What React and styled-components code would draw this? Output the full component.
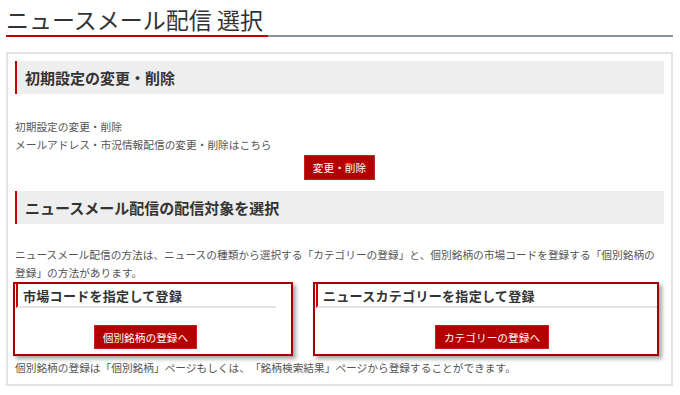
import styled, { createGlobalStyle } from 'styled-components';

const GlobalStyle = createGlobalStyle`
  body {
    margin: 0;
    background: #fff;
    font-family: 'Noto Sans CJK JP', 'Noto Sans', sans-serif;
    color: #333;
    text-spacing-trim: space-all;
  }
`;

const Page = styled.div`
  width: 680px;
  padding: 0 7px 0 6px;
  box-sizing: border-box;
`;

const Title = styled.h1`
  margin: 0;
  padding-top: 4px;
  height: 31px;
  font-size: 23px;
  font-weight: 400;
  line-height: 31px;
  color: #333;
`;

const TitleRule = styled.div`
  display: flex;
  height: 2px;
  margin-bottom: 15px;

  span:first-child {
    width: 262px;
    background: #c40000;
  }
  span:last-child {
    flex: 1;
    background: #8b959e;
  }
`;

const Panel = styled.div`
  border: 2px solid #e3e3e3;
  padding: 7px 7px 7px;
`;

const SectionHead = styled.h2`
  margin: ${(p) => p.$top || 0}px 0 0;
  height: 33px;
  display: flex;
  align-items: center;
  padding-left: 8px;
  background: #eeeeee;
  border-left: 2px solid #c40000;
  font-size: 15px;
  font-weight: 700;
  color: #333;
`;

const Text = styled.p`
  margin: ${(p) => p.$top || 0}px 0 0;
  font-size: 10.7px;
  line-height: 18px;
  color: #555;
`;

const ButtonRow = styled.div`
  display: flex;
  justify-content: center;
  margin-top: ${(p) => p.$top || 0}px;
  padding-left: ${(p) => p.$shift || 0}px;
`;

const RedButton = styled.a`
  display: inline-flex;
  align-items: center;
  height: ${(p) => p.$h || 24}px;
  padding: 0 8px;
  background: #b30000;
  border: 1px solid #c62020;
  box-sizing: border-box;
  color: #fff;
  font-size: 10.7px;
  text-decoration: none;
`;

const BoxRow = styled.div`
  display: flex;
  gap: 20px;
  margin-left: -2px;
`;

const Box = styled.div`
  width: ${(p) => p.$w}px;
  height: 74px;
  box-sizing: border-box;
  border: 2px solid #a80000;
  padding: 0 ${(p) => p.$pr || 0}px 0 0;
  box-shadow: 3px 3px 4px rgba(0, 0, 0, 0.35);
  background: #fff;
`;

const BoxHead = styled.div`
  height: 22px;
  margin-left: 1px;
  border-left: 2px solid #c40000;
  border-bottom: 2px solid #e2e2e2;
  padding-left: 5px;
  display: flex;
  align-items: center;
  font-size: 13px;
  font-weight: 700;
  letter-spacing: 0.3px;
  color: #333;
`;

export default function App() {
  return (
    <Page>
      <GlobalStyle />
      <Title>ニュースメール配信 選択</Title>
      <TitleRule>
        <span />
        <span />
      </TitleRule>
      <Panel>
        <SectionHead>初期設定の変更・削除</SectionHead>
        <Text $top={24}>
          初期設定の変更・削除
          <br />
          メールアドレス・市況情報配信の変更・削除はこちら
        </Text>
        <ButtonRow $top={1}>
          <RedButton href="#" $h={25}>変更・削除</RedButton>
        </ButtonRow>
        <SectionHead $top={11}>ニュースメール配信の配信対象を選択</SectionHead>
        <Text $top={22}>
          ニュースメール配信の方法は、ニュースの種類から選択する「カテゴリーの登録」と、個別銘柄の市場コードを登録する「個別銘柄の
          <br />
          登録」の方法があります。
        </Text>
        <BoxRow>
          <Box $w={280} $pr={15}>
            <BoxHead>市場コードを指定して登録</BoxHead>
            <ButtonRow $top={17}>
              <RedButton href="#">個別銘柄の登録へ</RedButton>
            </ButtonRow>
          </Box>
          <Box $w={346}>
            <BoxHead>ニュースカテゴリーを指定して登録</BoxHead>
            <ButtonRow $top={17} $shift={12}>
              <RedButton href="#">カテゴリーの登録へ</RedButton>
            </ButtonRow>
          </Box>
        </BoxRow>
        <Text $top={3}>
          個別銘柄の登録は「個別銘柄」ページもしくは、「銘柄検索結果」ページから登録することができます。
        </Text>
      </Panel>
    </Page>
  );
}
